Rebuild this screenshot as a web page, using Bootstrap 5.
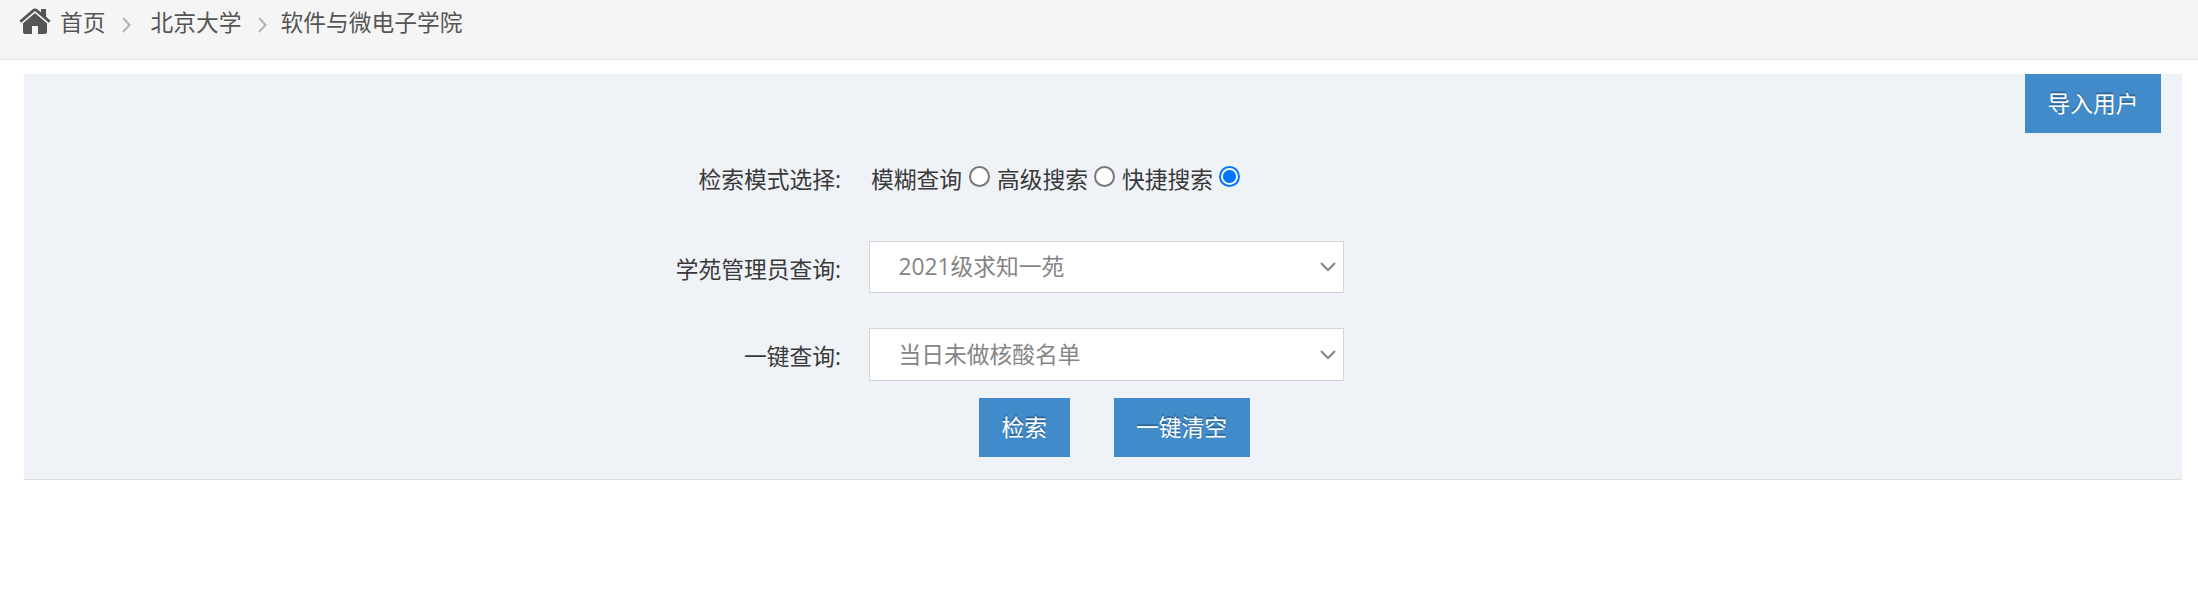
<!DOCTYPE html>
<html lang="zh-CN">
<head>
<meta charset="utf-8">
<title>软件与微电子学院</title>
<meta name="viewport" content="width=device-width, initial-scale=1">
<link rel="stylesheet" href="https://cdn.jsdelivr.net/npm/bootstrap@5.3.0/dist/css/bootstrap.min.css">
<style>
body{font:22.75px/34px "Open Sans","Noto Sans CJK SC",sans-serif;color:#393939;background:#fff;overflow:hidden}
.crumbs{height:60px;background:#f5f5f5;border-bottom:1px solid #e5e5e5;padding:6px 0 0 19px}
.crumbs .breadcrumb{--bs-breadcrumb-font-size:22.75px;color:#555}
.home{width:32px;height:27px;margin:2px 9px 0 0}
.sep{width:10px;height:16px;margin-top:11px}
.sep-a{margin-left:15px;margin-right:20px}
.sep-b{margin-left:15px;margin-right:14px}
.panel{margin:14px 16px 0 24px;height:406px;background:#eff3f8;border-bottom:1px solid #ddd;padding-right:21px}
.btn-blue{--bs-btn-bg:#428bca;--bs-btn-color:#fff;--bs-btn-hover-bg:#1b6aaa;--bs-btn-hover-color:#fff;--bs-btn-border-radius:0;--bs-btn-border-width:0;--bs-btn-font-size:22.75px;--bs-btn-padding-x:22.5px;--bs-btn-padding-y:0;height:59px;line-height:59px;text-shadow:0 -1.75px 0 rgba(0,0,0,.25);white-space:nowrap}
.field-label{width:817px;text-align:right;flex:none}
.modes{height:36px;margin-top:30px}
.modes .form-check-input{width:21px;height:21px;margin:3px 7px 0 6px;border:2px solid #767676;background:#fff;flex:none;box-shadow:none}
.modes .form-check-input:checked{border-color:#0075ff;background:radial-gradient(circle,#0075ff 6px,#fff 7px)}
.first-mode{margin-left:30px;margin-right:1px}
.row-a{margin-top:42px}
.row-b{margin-top:35px}
.picker{width:475px;height:52px;margin-left:28px;border:1px solid #d5d5d5;border-radius:0;color:#858585;font-size:22.75px;line-height:50px;padding:0 28px 0 28.5px;background-color:#fff;background-image:url("data:image/svg+xml,%3Csvg xmlns='http://www.w3.org/2000/svg' viewBox='0 0 16 10'%3E%3Cpath d='M1 1l7 7 7-7' fill='none' stroke='%23858585' stroke-width='2'/%3E%3C/svg%3E");background-size:16px 10px;background-position:right 7px center}
.picker-tall{height:53px}
.actions{margin:17px 0 0 955px;gap:44px}
</style>
</head>
<body>
<nav class="crumbs" aria-label="breadcrumb">
  <div class="breadcrumb d-flex flex-nowrap mb-0">
    <svg class="home" viewBox="0 0 32 27" fill="#555"><path d="M16 5 L28 15v9q0 2-2 2h-7v-8h-6v8H6q-2 0-2-2v-9z"/><path d="M1.3 14.2 14 3.3q2-1.5 4 0l12.7 10.9" fill="none" stroke="#f5f5f5" stroke-width="5"/><path d="M22 1h5v10l-5-4z"/><path d="M1.3 13.7 14.2 2.6q1.8-1.4 3.6 0l12.9 11.1" fill="none" stroke="#555" stroke-width="2.8"/></svg>
    <span>首页</span>
    <svg class="sep sep-a" viewBox="0 0 10 16"><path d="M2 1l6.5 7L2 15" fill="none" stroke="#b2b6bf" stroke-width="2.2"/></svg>
    <span>北京大学</span>
    <svg class="sep sep-b" viewBox="0 0 10 16"><path d="M2 1l6.5 7L2 15" fill="none" stroke="#b2b6bf" stroke-width="2.2"/></svg>
    <span>软件与微电子学院</span>
  </div>
</nav>
<main class="panel">
  <div class="d-flex justify-content-end"><button class="btn btn-blue">导入用户</button></div>
  <div class="modes d-flex">
    <span class="field-label">检索模式选择:</span>
    <label class="first-mode" for="m1">模糊查询</label><input class="form-check-input" type="radio" name="mode" id="m1">
    <label for="m2">高级搜索</label><input class="form-check-input" type="radio" name="mode" id="m2">
    <label for="m3">快捷搜索</label><input class="form-check-input" type="radio" name="mode" id="m3" checked>
  </div>
  <div class="d-flex row-a">
    <label class="field-label pt-2 mt-1" for="s1">学苑管理员查询:</label>
    <select class="form-select picker" id="s1"><option>2021级求知一苑</option></select>
  </div>
  <div class="d-flex row-b">
    <label class="field-label pt-2 mt-1" for="s2">一键查询:</label>
    <select class="form-select picker picker-tall" id="s2"><option>当日未做核酸名单</option></select>
  </div>
  <div class="d-flex actions">
    <button class="btn btn-blue">检索</button>
    <button class="btn btn-blue">一键清空</button>
  </div>
</main>
<script src="https://cdn.jsdelivr.net/npm/bootstrap@5.3.0/dist/js/bootstrap.bundle.min.js"></script>
</body>
</html>
